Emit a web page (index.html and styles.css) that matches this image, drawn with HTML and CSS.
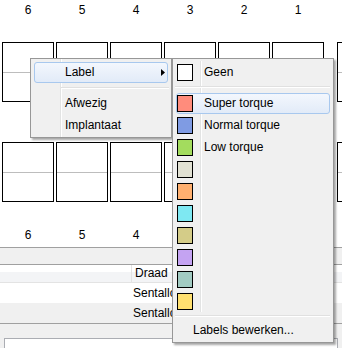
FILE: index.html
```html
<!DOCTYPE html>
<html lang="nl">
<head>
    <meta charset="UTF-8">
    <title>Gebitsoverzicht</title>
    <link rel="stylesheet" href="styles.css">
</head>
<body>
    <div class="chart">
        <div class="row nums">
            <div class="quad">
                <span>6</span><span>5</span><span>4</span><span>3</span><span>2</span><span>1</span>
            </div>
            <div class="quad rest"><span></span></div>
        </div>
        <div class="row teeth upper">
            <div class="quad">
                <div class="tooth"></div><div class="tooth"></div><div class="tooth"></div>
                <div class="tooth"></div><div class="tooth"></div><div class="tooth"></div>
            </div>
            <div class="quad rest"><div class="tooth"></div></div>
        </div>
        <div class="row teeth lower">
            <div class="quad">
                <div class="tooth"></div><div class="tooth"></div><div class="tooth"></div>
                <div class="tooth"></div><div class="tooth"></div><div class="tooth"></div>
            </div>
            <div class="quad rest"><div class="tooth"></div></div>
        </div>
        <div class="row nums bottom">
            <div class="quad">
                <span>6</span><span>5</span><span>4</span><span>3</span><span>2</span><span>1</span>
            </div>
            <div class="quad rest"><span></span></div>
        </div>
    </div>

    <div class="panel">
        <div class="toolbar"></div>
        <div class="grid">
            <div class="grid-row head"><div class="cell">Draad</div></div>
            <div class="grid-row"><div class="cell">Sentalloy</div></div>
            <div class="grid-row alt"><div class="cell">Sentalloy</div></div>
        </div>
        <div class="footer">
            <div class="input"></div>
        </div>
    </div>

    <!-- context menu -->
    <div class="menu menu-main">
        <div class="item hover">
            <span class="text">Label</span>
            <svg class="arrow" width="4" height="7" viewBox="0 0 4 7"><path d="M0 0 L4 3.5 L0 7 Z" fill="#000"/></svg>
        </div>
        <div class="sep"></div>
        <div class="item"><span class="text">Afwezig</span></div>
        <div class="item"><span class="text">Implantaat</span></div>
    </div>

    <!-- submenu labels -->
    <div class="menu menu-labels">
        <div class="menu-body">
            <div class="item"><span class="sw sw-none"></span><span class="text">Geen</span></div>
            <div class="sep"></div>
            <div class="item hover"><span class="sw sw-super"></span><span class="text">Super torque</span></div>
            <div class="item"><span class="sw sw-normal"></span><span class="text">Normal torque</span></div>
            <div class="item"><span class="sw sw-low"></span><span class="text">Low torque</span></div>
            <div class="item"><span class="sw sw-beige"></span></div>
            <div class="item"><span class="sw sw-orange"></span></div>
            <div class="item"><span class="sw sw-cyan"></span></div>
            <div class="item"><span class="sw sw-khaki"></span></div>
            <div class="item"><span class="sw sw-purple"></span></div>
            <div class="item"><span class="sw sw-teal"></span></div>
            <div class="item"><span class="sw sw-yellow"></span></div>
        </div>
        <div class="sep last"></div>
        <div class="item"><span class="text edit">Labels bewerken...</span></div>
    </div>
</body>
</html>
```

FILE: styles.css
```css
body {
    margin: 0;
    width: 342px;
    height: 348px;
    overflow: hidden;
    background: #fff;
    font-family: "Liberation Sans", Arial, sans-serif;
    font-size: 12px;
    color: #000;
    position: relative;
}
.chart {
    padding-left: 2px;
}
.row {
    display: flex;
    gap: 13px;
}
.quad {
    display: flex;
    gap: 2px;
}
.quad.rest {
    flex: 1;
    min-width: 0;
    overflow: hidden;
}
.nums {
    height: 20px;
    line-height: 20px;
}
.nums span {
    width: 52px;
    flex-shrink: 0;
    text-align: center;
}
.nums.bottom {
    margin-top: 23px;
}
.teeth.upper {
    margin-top: 22px;
}
.teeth.lower {
    margin-top: 40px;
}
.tooth {
    box-sizing: border-box;
    flex-shrink: 0;
    width: 52px;
    height: 60px;
    border: 1px solid #000;
    background: linear-gradient(to bottom, #fff 29px, #bdbdbd 29px, #bdbdbd 30px, #fff 30px);
}

/* lower panel */
.panel {
    margin-top: 2px;
    border-top: 1px solid #a0a0a0;
    background: #f0f0f0;
}
.toolbar {
    height: 16px;
    border-bottom: 1px solid #a0a0a0;
}
.grid {
    border-bottom: 1px solid #a0a0a0;
}
.grid-row {
    height: 20px;
    background: #fff;
    display: flex;
    align-items: center;
    padding-left: 131px;
}
.grid-row.head {
    height: 17px;
    background: linear-gradient(to bottom, #fff 7px, #f3f4f6 7px);
    border-bottom: 1px solid #e3e3e3;
}
.grid-row.head .cell {
    border-left: 1px solid #e3e3e3;
    padding-left: 3px;
    height: 17px;
    line-height: 17px;
}
.grid-row.alt {
    background: #f0f0f0;
}
.cell {
    padding-left: 2px;
    white-space: nowrap;
}
.footer {
    padding: 14px 4px 0;
    height: 10px;
    overflow: hidden;
}
.input {
    height: 30px;
    background: #fff;
    border: 1px solid #abadb3;
}

/* menus */
.menu {
    position: absolute;
    box-sizing: border-box;
    background: #f0f0f0;
    border: 1px solid #979797;
    box-shadow: 2px 2px 2px rgba(0,0,0,0.35);
    padding: 2px 2px 1px;
}
.menu-main {
    left: 30px;
    top: 58px;
    width: 142px;
    background: linear-gradient(to right, transparent 29px, #e2e3e3 29px, #e2e3e3 30px, #fff 30px, #fff 31px, transparent 31px), #f0f0f0;
}
.menu-labels {
    left: 172px;
    top: 58px;
    width: 162px;
}
.menu-body {
    background: linear-gradient(to right, transparent 25px, #e2e3e3 25px, #e2e3e3 26px, #fff 26px, #fff 27px, transparent 27px);
}
.item {
    position: relative;
    height: 22px;
    display: flex;
    align-items: center;
}
.item.hover::before {
    content: "";
    position: absolute;
    top: 1px;
    bottom: 0;
    left: 1px;
    right: 1px;
    border: 1px solid #a8c8ee;
    border-radius: 3px;
    background: linear-gradient(to bottom, #f3f7fd, #e2ebf8);
}
.item > * {
    position: relative;
}
.menu-main .text {
    padding-left: 32px;
}
.arrow {
    margin-left: auto;
    margin-right: 4px;
}
.sep {
    height: 9px;
    position: relative;
}
.sep::after {
    content: "";
    position: absolute;
    top: 3px;
    left: 0;
    right: 0;
    border-top: 1px solid #e0e0e0;
    border-bottom: 1px solid #fff;
}
.menu-main .sep::after {
    left: 28px;
    top: 4px;
}
.menu-labels .sep::after {
    left: 0;
    right: 1px;
}
.sep.last {
    height: 7px;
}
.sw {
    box-sizing: border-box;
    width: 16px;
    height: 17px;
    margin-left: 2px;
    margin-top: 1px;
    border: 1px solid #000;
}
.menu-labels .text {
    padding-left: 11px;
}
.menu-labels .text.edit {
    padding-left: 18px;
}
.sw-none { background: #fff; }
.sw-super { background: #ff8c7c; }
.sw-normal { background: #7f9be3; }
.sw-low { background: #a3dc5e; }
.sw-beige { background: #e1e1d3; }
.sw-orange { background: #ffb070; }
.sw-cyan { background: #7ee8f2; }
.sw-khaki { background: #d4cc88; }
.sw-purple { background: #c4a3f2; }
.sw-teal { background: #a2cbc2; }
.sw-yellow { background: #ffe070; }
```
